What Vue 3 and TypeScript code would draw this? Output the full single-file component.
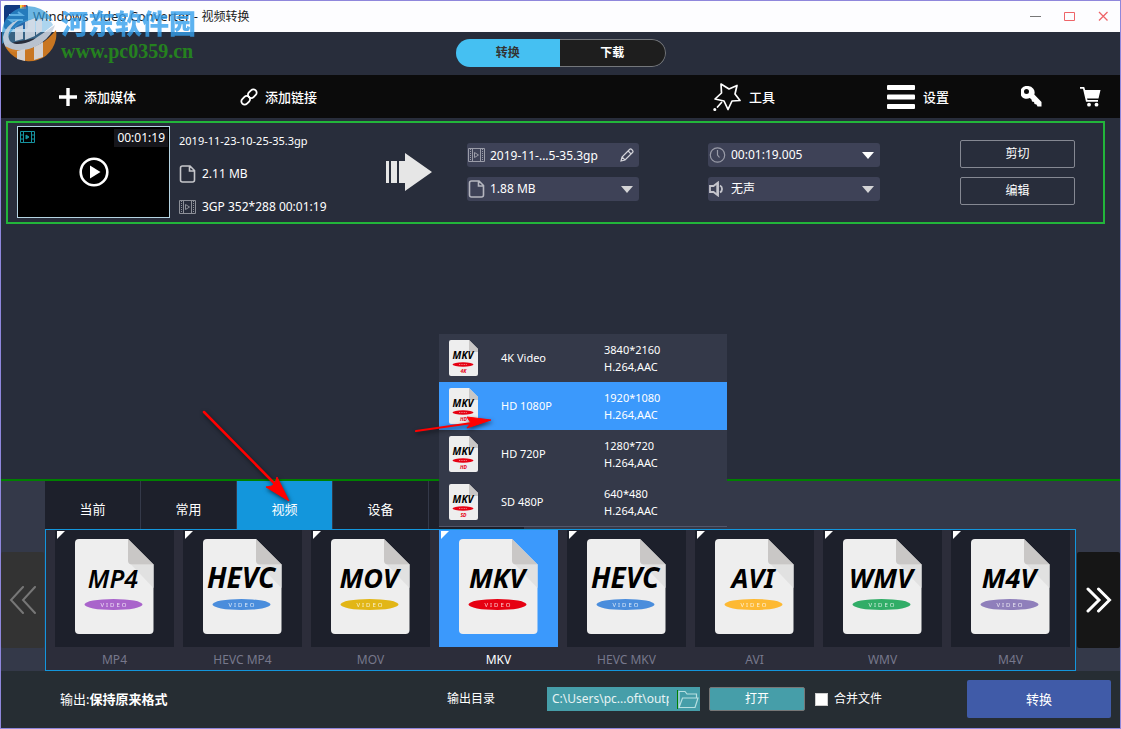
<script setup lang="ts">
import { ref } from 'vue'

interface Format {
  title: string
  label: string
  color: string
  size: number
  weight: number
}
interface Preset {
  name: string
  resolution: string
  codec: string
  tag: string
}

const tabs = ['当前', '常用', '视频', '设备']
const activeTab = ref('视频')
const activeFormat = ref('MKV')
const activePreset = ref('HD 1080P')
const fileName = ref('2019-11-...5-35.3gp')
const outputPath = ref('C:\\Users\\pc...oft\\output')
const merge = ref(false)

const formats: Format[] = [
  { title: 'MP4', label: 'MP4', color: '#a964cb', size: 25, weight: 600 },
  { title: 'HEVC', label: 'HEVC MP4', color: '#4a8ddc', size: 28, weight: 700 },
  { title: 'MOV', label: 'MOV', color: '#e2b616', size: 27, weight: 700 },
  { title: 'MKV', label: 'MKV', color: '#e60012', size: 27, weight: 700 },
  { title: 'HEVC', label: 'HEVC MKV', color: '#4a8ddc', size: 28, weight: 700 },
  { title: 'AVI', label: 'AVI', color: '#fdb933', size: 27, weight: 700 },
  { title: 'WMV', label: 'WMV', color: '#31ad67', size: 27, weight: 700 },
  { title: 'M4V', label: 'M4V', color: '#8f7fbb', size: 27, weight: 700 },
]
const presets: Preset[] = [
  { name: '4K Video', resolution: '3840*2160', codec: 'H.264,AAC', tag: '4K' },
  { name: 'HD 1080P', resolution: '1920*1080', codec: 'H.264,AAC', tag: 'HD' },
  { name: 'HD 720P', resolution: '1280*720', codec: 'H.264,AAC', tag: 'HD' },
  { name: 'SD 480P', resolution: '640*480', codec: 'H.264,AAC', tag: 'SD' },
]
</script>

<template>
  <div class="window">
    <header class="titlebar">
      <svg class="app-icon" width="24" height="24" viewBox="0 0 24 24" aria-hidden="true">
        <rect width="24" height="24" rx="2" fill="#123a80" />
        <path d="M16 0h2v4h-2z" fill="#f4d13c" /><path d="M18 0h2v4h-2z" fill="#f08a2c" /><path d="M20 0h2v4h-2z" fill="#d9443a" />
        <path d="M5 10h13l-4-3M19 15H6l4 3" fill="none" stroke="#cfe6ff" stroke-width="2" />
      </svg>
      <h1><span>Windows Video Converter - </span>视频转换</h1>
      <div class="window-buttons">
        <button aria-label="最小化"><svg width="11" height="11" viewBox="0 0 11 11"><path d="M0 5.5h11" stroke="#777" /></svg></button>
        <button aria-label="最大化"><svg width="11" height="11" viewBox="0 0 11 11"><path d="M.5 1.5h10v8H.5z" fill="none" stroke="#ee6468" /></svg></button>
        <button aria-label="关闭"><svg width="11" height="11" viewBox="0 0 11 11"><path d="M1 1l8.500 8.500M9.500 1L1 9.500" stroke="#ee6468" stroke-width="1.300" /></svg></button>
      </div>
    </header>

    <div class="mode-bar">
      <div class="mode">
        <button class="on">转换</button>
        <button>下载</button>
      </div>
    </div>

    <nav class="toolbar">
      <button class="add-media">
        <svg width="18" height="18" viewBox="0 0 18 18"><path d="M9 0v18M0 9h18" stroke="#fff" stroke-width="3.400" /></svg>
        <span>添加媒体</span>
      </button>
      <button class="add-link">
        <svg width="18" height="18" viewBox="0 0 18 18" fill="none" stroke="#fff" stroke-width="1.800">
          <rect x="-4.800" y="-3.300" width="9.600" height="6.600" rx="3.300" transform="translate(12.300 5.700) rotate(-45)" />
          <rect x="-4.800" y="-3.300" width="9.600" height="6.600" rx="3.300" transform="translate(5.700 12.300) rotate(-45)" />
        </svg>
        <span>添加链接</span>
      </button>
      <button class="tools">
        <svg width="28" height="28" viewBox="0 0 28 28" fill="none" stroke="#fff" stroke-width="1.700" stroke-linejoin="round" stroke-linecap="round">
          <path d="M8 1l8 5 8-3.500-2 8.500 5 6.500-8 .5-4 8.500-4-8.500-9-2 6.500-6z" /><path d="M8.500 19.500L4.500 24" /><circle cx="1.800" cy="26.500" r=".7" fill="#fff" />
        </svg>
        <span>工具</span>
      </button>
      <button class="settings">
        <svg width="28" height="24" viewBox="0 0 28 24" fill="#fff"><rect width="28" height="5" rx="1" /><rect y="9.500" width="28" height="5" rx="1" /><rect y="19" width="28" height="5" rx="1" /></svg>
        <span>设置</span>
      </button>
      <button class="key" aria-label="注册">
        <svg width="21" height="21" viewBox="0 0 21 21" fill="#fff"><path fill-rule="evenodd" d="M7 0a6.500 6.500 0 0 1 6.300 8.500L20.500 16v4.500h-4l-1-2-2-.5-.5-2-2-.5-.5-2-1.700-1.400A6.500 6.500 0 1 1 7 0zM5.500 3A2.500 2.500 0 1 0 5.500 8a2.500 2.500 0 0 0 0-5z" /></svg>
      </button>
      <button class="cart" aria-label="购物车">
        <svg width="21" height="20" viewBox="0 0 21 20" fill="#fff"><path d="M0 0h4.200l1 3H20.500l-2 8.500H7l.5 1.500H18v1.800H6L3 1.800H0z" /><circle cx="9" cy="17.700" r="1.900" /><circle cx="16.500" cy="17.700" r="1.900" /></svg>
      </button>
    </nav>

    <main class="list">
      <article class="task">
        <div class="thumb">
          <div class="thumb-top">
            <svg width="15" height="12" viewBox="0 0 15 12" fill="none" stroke="#16929f"><path d="M.5.500h14v11H.5zM3.500 0v12M11.500 0v12M0 4h3M0 8h3M12 4h3M12 8h3" /><path d="M6 4l3 2-3 2z" fill="#16929f" /></svg>
            <time>00:01:19</time>
          </div>
          <button class="play" aria-label="播放"><svg width="30" height="30" viewBox="0 0 30 30"><circle cx="15" cy="15" r="13.300" fill="none" stroke="#fff" stroke-width="2.600" /><path d="M11 8.500L21.500 15 11 21.500z" fill="#fff" /></svg></button>
        </div>
        <div class="info">
          <p class="source-name">2019-11-23-10-25-35.3gp</p>
          <p>
            <svg class="info-icon" width="16" height="18" viewBox="0 0 16 18" fill="none" stroke="#c5c6ca" stroke-width="1.600"><path d="M3 1h7.500L15 5.500V15a2 2 0 0 1-2 2H3a2 2 0 0 1-2-2V3a2 2 0 0 1 2-2zM10 1v5h5" /></svg>
            2.11 MB
          </p>
          <p>
            <svg class="info-icon" width="17" height="14" viewBox="0 0 17 14" fill="none" stroke="#8d9098"><path d="M.5.500h16v13H.5zM4.500 0v14M12.500 0v14" /><path d="M2.500 1v12M14.500 1v12" stroke-dasharray="1 1" /><path d="M6.500 4.500l4 2.500-4 2.500z" /></svg>
            3GP 352*288 00:01:19
          </p>
        </div>
        <svg class="to" width="46" height="38" viewBox="0 0 46 38" fill="#e6e6e6" aria-hidden="true"><path d="M0 8h3v22H0zM5 8h6v22H5zM13 8h6V0l27 19-27 19v-8h-6z" /></svg>
        <div class="fields">
          <div class="field">
            <svg class="field-icon" width="17" height="14" viewBox="0 0 17 14" fill="none" stroke="#9a9ca8"><path d="M.5.500h16v13H.5zM4.500 0v14M12.500 0v14" /><path d="M2.500 1v12M14.500 1v12" stroke-dasharray="1 1" /><path d="M6.500 4.500l4 2.500-4 2.500z" /></svg>
            <input v-model="fileName" aria-label="文件名" />
            <button class="rename" aria-label="重命名"><svg width="14" height="14" viewBox="0 0 14 14" fill="none" stroke="#d4d4da" stroke-width="1.200"><path d="M1 13l1-4 7.500-7.500a1.600 1.600 0 0 1 2.200 0l.8.800a1.600 1.600 0 0 1 0 2.200L5 12zM8.200 3l2.800 2.800M2 9l3 3" /></svg></button>
          </div>
          <div class="field">
            <svg class="field-icon" width="17" height="18" viewBox="0 0 16 18" fill="none" stroke="#b5b6bf" stroke-width="1.600"><path d="M3 1h7.500L15 5.500V15a2 2 0 0 1-2 2H3a2 2 0 0 1-2-2V3a2 2 0 0 1 2-2zM10 1v5h5" /></svg>
            <select aria-label="文件大小"><option>1.88 MB</option></select>
            <svg class="caret" width="12" height="7" viewBox="0 0 12 7"><path d="M0 0h12L6 7z" fill="#d4d4d6" /></svg>
          </div>
        </div>
        <div class="fields second">
          <div class="field">
            <svg class="field-icon" width="17" height="16" viewBox="0 0 16 16" fill="none" stroke="#9a9ca8" stroke-width="1.200"><circle cx="8" cy="8" r="7.200" /><path d="M8 3v5l2 2.500" /></svg>
            <select aria-label="时长"><option>00:01:19.005</option></select>
            <svg class="caret" width="12" height="7" viewBox="0 0 12 7"><path d="M0 0h12L6 7z" fill="#fff" /></svg>
          </div>
          <div class="field">
            <svg class="field-icon" width="17" height="16" viewBox="0 0 17 16" fill="none" stroke="#c5c5cc" stroke-width="1.800"><path d="M1 5h3.500L9 1.500v13L4.500 11H1zM11 4.500a4 4 0 0 1 0 7" /><path d="M8.500 2v12" stroke-width="2.400" /></svg>
            <select aria-label="音频"><option>无声</option></select>
            <svg class="caret" width="12" height="7" viewBox="0 0 12 7"><path d="M0 0h12L6 7z" fill="#d4d4d6" /></svg>
          </div>
        </div>
        <div class="actions">
          <button>剪切</button>
          <button>编辑</button>
        </div>
      </article>
    </main>

    <section class="formats">
      <div class="tabs">
        <button v-for="t in tabs" :key="t" :class="{ on: t === activeTab }" @click="activeTab = t">{{ t }}</button>
        <button aria-label="音频"></button>
      </div>
      <button class="page prev" aria-label="上一页"><svg width="28" height="28" viewBox="0 0 28 28"><path d="M14 1L2 14l12 13M26 1L14 14l12 13" /></svg></button>
      <ul class="panel">
        <li v-for="f in formats" :key="f.label" :class="{ on: f.label === activeFormat }">
          <button class="tile" :aria-label="f.label" @click="activeFormat = f.label">
            <svg width="119" height="117" viewBox="0 0 119 117">
              <path d="M2 1h8l-8 8z" fill="#fff" />
              <path d="M24 9h49l25.500 25.500V100a4 4 0 0 1-4 4H24a4 4 0 0 1-4-4V13a4 4 0 0 1 4-4z" fill="#eee" />
              <path d="M76 34.500h22.500V58z" fill="#e1e1e1" />
              <path d="M73 9l25.500 25.500H77a4 4 0 0 1-4-4z" fill="#c9c7c6" />
              <text class="doc-title" x="58" y="58" text-anchor="middle" :font-size="f.size" :font-weight="f.weight">{{ f.title }}</text>
              <ellipse cx="58.500" cy="74.500" rx="29" ry="5.500" :fill="f.color" />
              <text class="doc-kind" x="59.500" y="76.500" text-anchor="middle" font-size="6" letter-spacing="2">VIDEO</text>
            </svg>
          </button>
          <span>{{ f.label }}</span>
          <ul v-if="f.label === activeFormat" class="menu">
            <li v-for="p in presets" :key="p.name">
              <button :class="{ on: p.name === activePreset }" @click="activePreset = p.name">
                <svg width="29" height="36" viewBox="0 0 29 36" aria-hidden="true">
                  <path d="M2 0h18l9 9v25a2 2 0 0 1-2 2H2a2 2 0 0 1-2-2V2a2 2 0 0 1 2-2z" fill="#eee" />
                  <path d="M20 0l9 9v3h-7a2 2 0 0 1-2-2z" fill="#c9c7c6" />
                  <text class="doc-title" x="14" y="19" text-anchor="middle" font-size="10" font-weight="700">MKV</text>
                  <ellipse cx="14" cy="24.500" rx="10.500" ry="2.200" fill="#e60012" />
                  <path d="M10 24.500h8" stroke="#f49aa0" stroke-width=".8" stroke-dasharray="1 .7" />
                  <text class="doc-tag" x="14.500" y="32.500" text-anchor="middle" font-size="5" font-weight="700">{{ p.tag }}</text>
                </svg>
                <span class="preset-name">{{ p.name }}</span>
                <span class="preset-spec">{{ p.resolution }}<br />{{ p.codec }}</span>
              </button>
            </li>
          </ul>
        </li>
      </ul>
      <button class="page next" aria-label="下一页"><svg width="26" height="26" viewBox="0 0 26 26"><path d="M2 2l11 11L2 24M12.500 2l11 11-11 11" /></svg></button>
    </section>

    <footer class="footer">
      <p class="output-format">输出:<b>保持原来格式</b></p>
      <label class="dir-label" for="dir">输出目录</label>
      <div class="path">
        <input id="dir" v-model="outputPath" />
        <button aria-label="选择文件夹"><svg width="21" height="19" viewBox="0 0 21 19" fill="none" stroke="#b7dfe1" stroke-width="1.200"><path d="M1 17.500V1.500h6l2 2.500h9.500v4M1 17.500L4.500 8H20l-3 9.500z" /></svg></button>
      </div>
      <button class="open">打开</button>
      <label class="merge"><input v-model="merge" type="checkbox" />合并文件</label>
      <button class="convert">转换</button>
    </footer>

    <div class="watermark" aria-hidden="true">
      <svg width="56" height="56" viewBox="0 0 56 56">
        <path d="M1 26A27 27 0 0 1 52 15C46 12 41 12 36 13 22 14 10 21 6 34L1 38z" fill="#2d97d6" opacity=".7" />
        <path d="M4 39C6 23 21 11 36 13 46 12 51 16 52 19L36 32 14 36z" fill="#4aa3dc" opacity=".45" />
        <path d="M2 31C4 21 12 15 18 14 10 20 6 27 8 33c2 7 14 6 24 1l22-15c-4 14-20 24-34 27-10 2-18-3-18-15z" fill="#c9d3df" opacity=".9" />
        <path d="M4 40C20 50 42 41 55 24A27 27 0 0 1 4 40z" fill="#d27a20" opacity=".95" />
        <path d="M14 22l8-3v14l-8 2zM24 16l10-4v18l-10 4zM35 15l6-2v12l-6 4zM16 45l8-2v12l-8-2zM33 41l9-5v15l-9 3z" fill="#d3dae4" opacity=".9" />
      </svg>
      <div><strong>河东软件园</strong><span>www.pc0359.cn</span></div>
    </div>

    <svg class="pointer tab-pointer" width="92" height="98" viewBox="0 0 92 98" aria-hidden="true"><path d="M3 3l70 71" stroke="#f00" stroke-width="2.500" stroke-linecap="round" /><path d="M88 92L65 78l6-1 3-3 2-6z" fill="#f00" stroke="#f00" stroke-linejoin="round" /></svg>
    <svg class="pointer preset-pointer" width="84" height="22" viewBox="0 0 84 22" aria-hidden="true"><path d="M4 17l56-8" stroke="#f00" stroke-width="2.200" stroke-linecap="round" /><path d="M79 6L55 14l4-5-4-6z" fill="#f00" stroke="#f00" stroke-linejoin="round" /></svg>
  </div>
</template>

<style>
body {
  margin: 0;
}
</style>

<style scoped>
* {
  box-sizing: border-box;
}
.window {
  position: relative;
  display: flex;
  flex-direction: column;
  min-height: 100vh;
  border: 1px solid #8f87dc;
  background: #282d3b;
  color: #fff;
  font: 12px/16px 'Noto Sans', 'Noto Sans CJK SC', sans-serif;
}
button,
input,
select {
  margin: 0;
  padding: 0;
  border: 0;
  border-radius: 0;
  background: none;
  color: inherit;
  font: inherit;
}
svg {
  display: block;
  flex: none;
}
p,
ul,
h1 {
  margin: 0;
  padding: 0;
  list-style: none;
}
.titlebar {
  display: flex;
  align-items: center;
  height: 31px;
  padding: 0 11px 0 3px;
  background: #fdfdff;
  color: #1a1a1a;
}
.titlebar h1 {
  flex: 1;
  margin-left: 5px;
  font-size: 12px;
  font-weight: 400;
}
.titlebar h1 span {
  font-size: 13px;
}
.window-buttons {
  display: flex;
  gap: 23px;
}
.mode-bar {
  display: flex;
  justify-content: center;
  height: 43px;
  padding-top: 7px;
}
.mode {
  display: flex;
  width: 210px;
  height: 28px;
  border-radius: 14px;
  overflow: hidden;
}
.mode button {
  flex: 1;
  border: 1px solid #74777b;
  border-left: 0;
  border-radius: 0 14px 14px 0;
  background: #1e1e1e;
  font-weight: 700;
}
.mode .on {
  border: 0;
  border-radius: 0;
  background: #45c0f2;
  color: #333;
}
.toolbar {
  display: flex;
  align-items: center;
  height: 43px;
  padding: 0 19px 0 58px;
  background: #0b0b0b;
  font-size: 13px;
  font-weight: 500;
}
.toolbar button {
  display: flex;
  align-items: center;
  gap: 7px;
}
.toolbar .add-link {
  margin-left: 104px;
}
.toolbar .tools {
  margin-left: auto;
  gap: 8px;
}
.toolbar .settings {
  margin-left: 112px;
  gap: 8px;
}
.toolbar .key {
  margin-left: 72px;
}
.toolbar .cart {
  margin-left: 38px;
}
.list {
  flex: 1;
  padding: 3px 15px 0 5px;
}
.task {
  display: flex;
  align-items: center;
  padding: 3px 28px 4px 9px;
  border: 2px solid #22b53a;
}
.thumb {
  display: flex;
  flex-direction: column;
  width: 153px;
  height: 92px;
  border: 1px solid #b5d4e2;
  background: #000;
}
.thumb-top {
  display: flex;
  justify-content: space-between;
  align-items: flex-start;
  height: 30px;
  padding: 2px 1px 0 2px;
}
.thumb-top svg {
  margin-top: 2px;
}
.thumb-top time {
  padding: 1px 3px;
  background: #16161b;
}
.play {
  align-self: center;
}
.info {
  display: flex;
  flex: 1;
  flex-direction: column;
  gap: 17px;
  margin-left: 9px;
  padding-top: 3px;
  white-space: nowrap;
}
.info p {
  display: flex;
  align-items: center;
  gap: 6px;
  height: 16px;
}
.info .source-name {
  font-size: 11px;
}
.info-icon {
  width: 17px;
}
.fields {
  display: flex;
  flex-direction: column;
  gap: 10px;
  width: 172px;
  margin-left: 35px;
}
.fields.second {
  margin-left: 69px;
}
.field {
  position: relative;
  display: flex;
  align-items: center;
  height: 24px;
  border-radius: 3px;
  background: #3e4257;
}
.field-icon {
  margin: 0 5px 0 1px;
}
.field input,
.field select {
  flex: 1;
  min-width: 0;
  height: 24px;
  appearance: none;
  outline: 0;
}
.rename {
  margin-right: 5px;
}
.caret {
  position: absolute;
  right: 6px;
  pointer-events: none;
}
.actions {
  display: flex;
  flex-direction: column;
  gap: 9px;
  width: 115px;
  margin-left: 80px;
}
.actions button {
  height: 28px;
  padding-top: 1px;
  border: 1px solid #858892;
  border-radius: 2px;
}
.formats {
  display: grid;
  grid-template-columns: 44px minmax(0, 1fr) 44px;
  border-top: 2px solid #008000;
  background: #343949;
}
.tabs {
  display: flex;
  grid-row: 1;
  grid-column: 2;
  gap: 1px;
}
.tabs button {
  width: 95px;
  height: 48px;
  padding-top: 8px;
  background: #1d202b;
  font-size: 13px;
}
.tabs .on {
  background: #1396dc;
}
.page {
  display: flex;
  grid-row: 2;
  justify-content: center;
  align-items: center;
  align-self: center;
  width: 43px;
  height: 96px;
  border-radius: 2px;
  background: #161616;
}
.page path {
  fill: none;
  stroke: #fff;
  stroke-width: 3;
  stroke-linecap: round;
}
.prev {
  grid-column: 1;
  background: #333;
}
.prev path {
  stroke: #777;
  stroke-width: 2;
}
.next {
  grid-column: 3;
  justify-self: end;
}
.panel {
  display: grid;
  grid-row: 2;
  grid-column: 2;
  grid-template-columns: repeat(8, minmax(0, 1fr));
  gap: 9px;
  padding: 0 5px 0 9px;
  border: 1px solid #1396dc;
  background: #2c2d3a;
}
.panel > li {
  position: relative;
  display: flex;
  flex-direction: column;
  color: #77788c;
  text-align: center;
}
.panel > li > span {
  margin: 5px 0 2px;
}
.panel > .on {
  color: #fff;
}
.tile {
  display: flex;
  justify-content: center;
  background: #1d202b;
}
.on > .tile {
  background: #3b99fc;
}
.doc-title {
  fill: #000;
  font-style: italic;
}
.doc-kind {
  fill: #fff;
  opacity: 0.8;
}
.doc-tag {
  fill: #e60012;
  font-style: italic;
}
.menu {
  position: absolute;
  bottom: calc(100% + 3px);
  left: 0;
  z-index: 2;
  width: 288px;
  border-bottom: 1px solid #55576a;
  background: #343949;
  color: #fff;
  font-size: 11px;
  line-height: 17px;
  text-align: left;
}
.menu button {
  display: flex;
  align-items: center;
  width: 100%;
  height: 48px;
  padding: 0 10px 1px;
  text-align: left;
}
.menu .on {
  background: #3b99fc;
}
.preset-name {
  width: 103px;
  margin-left: 23px;
}
.footer {
  display: flex;
  align-items: center;
  height: 57px;
  padding: 0 9px 1px 59px;
  background: #262d33;
  white-space: nowrap;
}
.output-format {
  flex: 1;
  font-size: 13px;
}
.dir-label {
  margin-right: 52px;
}
.path {
  display: flex;
  align-items: center;
  width: 153px;
  height: 24px;
  background: #469ea9;
  color: #e6f3f4;
}
.path input {
  flex: 1;
  min-width: 0;
  margin: 0 8px 0 5px;
  outline: 0;
}
.path button {
  padding-right: 1px;
  border-left: 1px solid #008000;
}
.open {
  width: 96px;
  height: 24px;
  margin-left: 9px;
  border: 1px solid #777;
  border-radius: 2px;
  background: #469ea9;
}
.merge {
  display: flex;
  align-items: center;
  gap: 6px;
  margin: 0 85px 0 10px;
}
.merge input {
  width: 13px;
  height: 13px;
  border: 1px solid #ccc;
  background: #fff;
  appearance: none;
}
.merge input:checked {
  background: #1396dc;
}
.convert {
  width: 144px;
  height: 38px;
  border-radius: 2px;
  background: #405ba8;
  font-size: 13px;
}
.watermark {
  position: absolute;
  top: 5px;
  left: 0;
  display: flex;
  gap: 4px;
  pointer-events: none;
}
.watermark div {
  display: flex;
  flex-direction: column;
}
.watermark strong {
  color: #35a0ed;
  font: 900 27px/34px 'Noto Sans CJK SC', sans-serif;
  opacity: 0.8;
}
.watermark span {
  color: #25811f;
  font: 700 20px/22px 'Liberation Serif', serif;
}
.pointer {
  position: absolute;
  z-index: 3;
  filter: drop-shadow(1px 2px 2px #0009);
  pointer-events: none;
}
.tab-pointer {
  top: 408px;
  left: 200px;
}
.preset-pointer {
  top: 413px;
  left: 411px;
}
</style>
